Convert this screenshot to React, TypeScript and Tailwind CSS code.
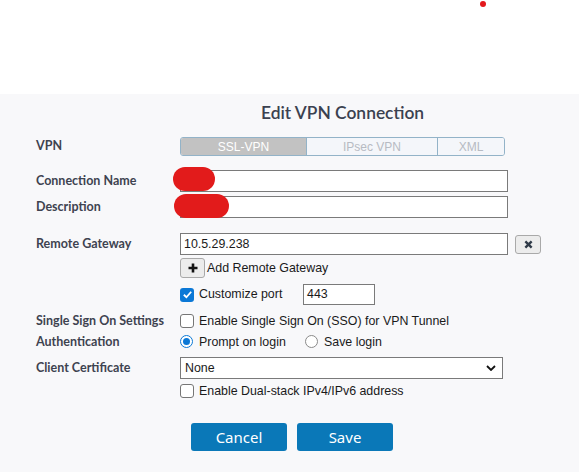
import React from 'react';

const label = "text-[12.5px] font-bold text-[#3e4350] [font-family:Lato,sans-serif]";
const ctl = "text-[12.4px] text-[#1a1a1a] [font-family:'Liberation_Sans',Arial,sans-serif]";

const Row = ({ name, className, children }: { name?: string; className?: string; children: React.ReactNode }) => (
  <div className={`flex items-center ${className ?? ''}`}>
    <div className={`w-[144px] shrink-0 ${label}`}>{name}</div>
    <div className="flex items-center flex-1">{children}</div>
  </div>
);

const Box = ({ checked }: { checked?: boolean }) =>
  checked ? (
    <span className="w-[14px] h-[14px] rounded-[3px] bg-[#0b78d6] flex items-center justify-center shrink-0">
      <svg viewBox="0 0 12 12" className="w-[11px] h-[11px]">
        <path d="M2 6.3 L4.8 9 L10 3" stroke="white" strokeWidth="2" fill="none" />
      </svg>
    </span>
  ) : (
    <span className="w-[14px] h-[14px] rounded-[3px] border border-[#767676] bg-white shrink-0" />
  );

export default function App() {
  return (
    <div className="w-[579px] h-[472px] bg-[#f8f8fa] overflow-hidden">
      <div className="h-[94px] bg-white flex justify-end pr-[93px] pt-[1px]">
        <span className="w-[6px] h-[6px] rounded-full bg-[#e3191c]" />
      </div>

      <div className="pl-[261px] pt-[6px] h-[34px] text-[17.4px] text-[#3b4150] font-semibold [font-family:Lato,sans-serif]">
        Edit VPN Connection
      </div>

      <div className="pl-[36px]">
        <Row name="VPN" className="mt-[9px] h-[19px]">
          <div className="flex h-[19px] w-[325px] rounded-[3px] border border-[#93b3c8] overflow-hidden text-[12px] [font-family:'Liberation_Sans',Arial,sans-serif]">
            <div className="w-[125px] bg-[#c2c2c2] text-white flex items-center justify-center">SSL-VPN</div>
            <div className="w-[131px] bg-[#f4f6fa] text-[#b7bbc3] flex items-center justify-center border-l border-[#93b3c8]">IPsec VPN</div>
            <div className="flex-1 bg-[#f4f6fa] text-[#b7bbc3] flex items-center justify-center border-l border-[#93b3c8]">XML</div>
          </div>
        </Row>

        <Row name="Connection Name" className="mt-[14px] h-[22px]">
          <div className="relative">
            <div className="w-[328px] h-[22px] bg-white border border-[#7a7a7a]" />
            <span className="absolute left-[-7px] top-[-3px] w-[42px] h-[24px] rounded-full bg-[#e21b1b]" />
          </div>
        </Row>

        <Row name="Description" className="mt-[4px] h-[22px]">
          <div className="relative">
            <div className="w-[328px] h-[22px] bg-white border border-[#7a7a7a]" />
            <span className="absolute left-[-6px] top-[-2px] w-[55px] h-[24px] rounded-full bg-[#e21b1b]" />
          </div>
        </Row>

        <Row name="Remote Gateway" className="mt-[15px] h-[22px]">
          <div className={`w-[328px] h-[22px] bg-white border border-[#7a7a7a] px-[3px] flex items-center ${ctl}`}>10.5.29.238</div>
          <button className="ml-[7px] w-[26px] h-[19px] rounded-[3px] border border-[#a9a9a9] bg-[#ececec] flex items-center justify-center">
            <svg viewBox="0 0 10 10" className="w-[9px] h-[9px]">
              <path d="M1.5 1.5 L8.5 8.5 M8.5 1.5 L1.5 8.5" stroke="#2f3a48" strokeWidth="2.6" />
            </svg>
          </button>
        </Row>

        <Row className="mt-[3px] h-[20px]">
          <button className="w-[25px] h-[20px] rounded-[3px] border border-[#a9a9a9] bg-[#ececec] flex items-center justify-center">
            <svg viewBox="0 0 10 10" className="w-[10px] h-[10px]">
              <path d="M5 0.5 V9.5 M0.5 5 H9.5" stroke="#111" strokeWidth="2.6" />
            </svg>
          </button>
          <span className={`ml-[2px] ${ctl}`}>Add Remote Gateway</span>
        </Row>

        <Row className="mt-[6px] h-[21px]">
          <Box checked />
          <span className={`ml-[5px] w-[104px] ${ctl}`}>Customize port</span>
          <div className={`w-[72px] h-[21px] bg-white border border-[#7a7a7a] px-[3px] flex items-center ${ctl}`}>443</div>
        </Row>

        <Row name="Single Sign On Settings" className="mt-[6px] h-[20px]">
          <Box />
          <span className={`ml-[5px] ${ctl}`}>Enable Single Sign On (SSO) for VPN Tunnel</span>
        </Row>

        <Row name="Authentication" className="mt-[1px] h-[20px]">
          <span className="w-[13px] h-[13px] rounded-full border border-[#0b78d6] bg-white flex items-center justify-center">
            <span className="w-[7px] h-[7px] rounded-full bg-[#0b78d6]" />
          </span>
          <span className={`ml-[6px] w-[106px] ${ctl}`}>Prompt on login</span>
          <span className="w-[13px] h-[13px] rounded-full border border-[#8a8a8a] bg-white" />
          <span className={`ml-[6px] ${ctl}`}>Save login</span>
        </Row>

        <Row name="Client Certificate" className="mt-[5px] h-[22px]">
          <div className={`w-[323px] h-[22px] bg-white border border-[#7a7a7a] pl-[4px] pr-[6px] flex items-center justify-between ${ctl}`}>
            <span>None</span>
            <svg viewBox="0 0 10 6" className="w-[10px] h-[6px]">
              <path d="M1 1 L5 5 L9 1" stroke="#111" strokeWidth="1.8" fill="none" />
            </svg>
          </div>
        </Row>

        <Row className="mt-[3px] h-[18px]">
          <Box />
          <span className={`ml-[5px] ${ctl}`}>Enable Dual-stack IPv4/IPv6 address</span>
        </Row>
      </div>

      <div className="flex gap-[10px] pl-[191px] mt-[23px]">
        <button className="w-[96px] h-[28px] rounded-[3px] bg-[#0a78b8] text-white text-[15px] [font-family:'Noto_Sans',sans-serif]">Cancel</button>
        <button className="w-[96px] h-[28px] rounded-[3px] bg-[#0a78b8] text-white text-[15px] [font-family:'Noto_Sans',sans-serif]">Save</button>
      </div>
    </div>
  );
}
